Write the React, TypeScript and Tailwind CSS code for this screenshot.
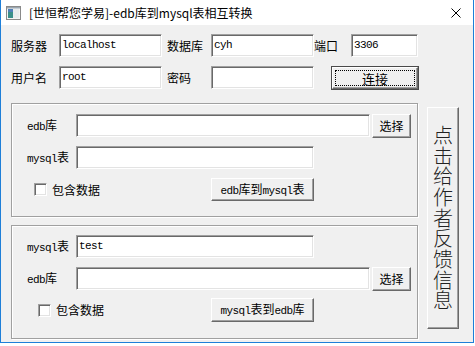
const mono = "font-['Liberation_Mono',monospace] text-[11px] tracking-[-0.6px]";

function Edit({ w, value }: { w: string; value?: string }) {
  return (
    <div
      className={`h-[23px] bg-white border border-t-[#a0a0a0] border-l-[#a0a0a0] border-b-white border-r-white shadow-[inset_1px_1px_0_#696969,inset_-1px_-1px_0_#e3e3e3] flex items-center pl-[2px] ${w}`}
    >
      {value && <span className={mono}>{value}</span>}
    </div>
  );
}

function Btn({ w, h, children, focus }: { w: string; h: string; children: React.ReactNode; focus?: boolean }) {
  return (
    <div
      className={`relative bg-[#f0f0f0] border border-t-white border-l-white border-b-[#696969] border-r-[#696969] shadow-[inset_-1px_-1px_0_#a0a0a0] flex items-center justify-center ${w} ${h}`}
    >
      {focus && <div className="absolute inset-[2px] border border-dotted border-black" />}
      <span className="relative">{children}</span>
    </div>
  );
}

function Check() {
  return (
    <div className="w-[13px] h-[13px] bg-white border border-t-[#a0a0a0] border-l-[#a0a0a0] border-b-white border-r-white shadow-[inset_1px_1px_0_#696969,inset_-1px_-1px_0_#e3e3e3]" />
  );
}

function Mixed({ latin, cjk, latinFirst = true }: { latin: string; cjk: string; latinFirst?: boolean }) {
  const l = <span className={mono}>{latin}</span>;
  return latinFirst ? (
    <span>
      {l}
      {cjk}
    </span>
  ) : (
    <span>
      {cjk}
      {l}
    </span>
  );
}

function Group({ children, pt }: { children: React.ReactNode; pt: string }) {
  return (
    <div
      className={`w-[407px] h-[114px] border border-[#a0a0a0] shadow-[inset_1px_1px_0_#fff,1px_1px_0_#fff] pl-[15px] ${pt}`}
    >
      {children}
    </div>
  );
}

export default function App() {
  return (
    <div className="w-[475px] h-[346px] bg-white font-['Noto_Sans_CJK_SC',sans-serif] text-[12px] leading-none text-black">
      <div className="w-[474px] h-[343px] border-l border-r border-b border-[#1e7fd8] flex flex-col">
        {/* title bar */}
        <div className="h-[25px] bg-white flex items-center shrink-0">
          <svg className="ml-[5px]" width="15" height="14" viewBox="0 0 15 14">
            <rect x="0.5" y="0.5" width="14" height="13" fill="#f4f4f4" stroke="#8a8a8a" />
            <rect x="2" y="3" width="5" height="9" fill="#3a8f8a" />
            <rect x="2" y="3" width="5" height="3" fill="#4f7fb8" />
            <rect x="7" y="3" width="6" height="9" fill="#e8ecee" />
            <rect x="1" y="1" width="13" height="1.5" fill="#9aa6b0" />
          </svg>
          <span className="ml-[8px] text-[12px]">[世恒帮您学易]-edb库到mysql表相互转换</span>
          <svg className="ml-auto mr-[12px]" width="10" height="10" viewBox="0 0 10 10">
            <path d="M0.5 0.5 L9.5 9.5 M9.5 0.5 L0.5 9.5" stroke="#000" strokeWidth="1" />
          </svg>
        </div>

        {/* body */}
        <div className="flex-1 bg-[#f0f0f0] pt-[9px]">
          <div className="flex items-center pl-[10px] h-[23px]">
            <span className="w-[48px]">服务器</span>
            <Edit w="w-[103px]" value="localhost" />
            <span className="ml-[5px] w-[44px]">数据库</span>
            <Edit w="w-[103px]" value="cyh" />
            <span className="w-[37px]">端口</span>
            <Edit w="w-[67px]" value="3306" />
          </div>
          <div className="flex items-start pl-[10px] mt-[9px]">
            <span className="w-[48px] h-[23px] flex items-center">用户名</span>
            <Edit w="w-[103px]" value="root" />
            <span className="ml-[5px] w-[44px] h-[23px] flex items-center">密码</span>
            <Edit w="w-[103px]" />
            <div className="ml-[17px] border border-[#4a4a4a]">
              <Btn w="w-[86px]" h="h-[22px]" focus>
                <span className="text-[13px]">连接</span>
              </Btn>
            </div>
          </div>

          <div className="flex items-start pl-[10px] mt-[13px]">
            <div className="flex flex-col gap-[8px]">
              <Group pt="pt-[10px]">
                <div className="flex items-start">
                  <span className="w-[49px] h-[23px] flex items-center">
                    <Mixed latin="edb" cjk="库" />
                  </span>
                  <Edit w="w-[294px]" />
                  <div className="ml-[2px]">
                    <Btn w="w-[39px]" h="h-[24px]">选择</Btn>
                  </div>
                </div>
                <div className="flex items-center mt-[8px]">
                  <span className="w-[49px]">
                    <Mixed latin="mysql" cjk="表" />
                  </span>
                  <Edit w="w-[238px]" />
                </div>
                <div className="flex items-center mt-[9px]">
                  <div className="w-[184px] flex items-center pl-[7px]">
                    <Check />
                    <span className="ml-[5px]">包含数据</span>
                  </div>
                  <Btn w="w-[103px]" h="h-[23px]">
                    <Mixed latin="edb" cjk="库到" />
                    <Mixed latin="mysql" cjk="表" />
                  </Btn>
                </div>
              </Group>

              <Group pt="pt-[9px]">
                <div className="flex items-center">
                  <span className="w-[49px]">
                    <Mixed latin="mysql" cjk="表" />
                  </span>
                  <Edit w="w-[238px]" value="test" />
                </div>
                <div className="flex items-start mt-[9px]">
                  <span className="w-[49px] h-[23px] flex items-center">
                    <Mixed latin="edb" cjk="库" />
                  </span>
                  <Edit w="w-[294px]" />
                  <div className="ml-[2px]">
                    <Btn w="w-[39px]" h="h-[24px]">选择</Btn>
                  </div>
                </div>
                <div className="flex items-center mt-[7px]">
                  <div className="w-[184px] flex items-center pl-[11px]">
                    <Check />
                    <span className="ml-[5px]">包含数据</span>
                  </div>
                  <Btn w="w-[103px]" h="h-[24px]">
                    <Mixed latin="mysql" cjk="表到" />
                    <Mixed latin="edb" cjk="库" />
                  </Btn>
                </div>
              </Group>
            </div>

            <div className="ml-[9px] mt-[4px]">
              <Btn w="w-[32px]" h="h-[222px]">
                <span className="block w-[20px] text-[20px] leading-[20.7px] text-[#222] font-light break-all text-center">
                  点击给作者反馈信息
                </span>
              </Btn>
            </div>
          </div>
        </div>
      </div>
    </div>
  );
}
